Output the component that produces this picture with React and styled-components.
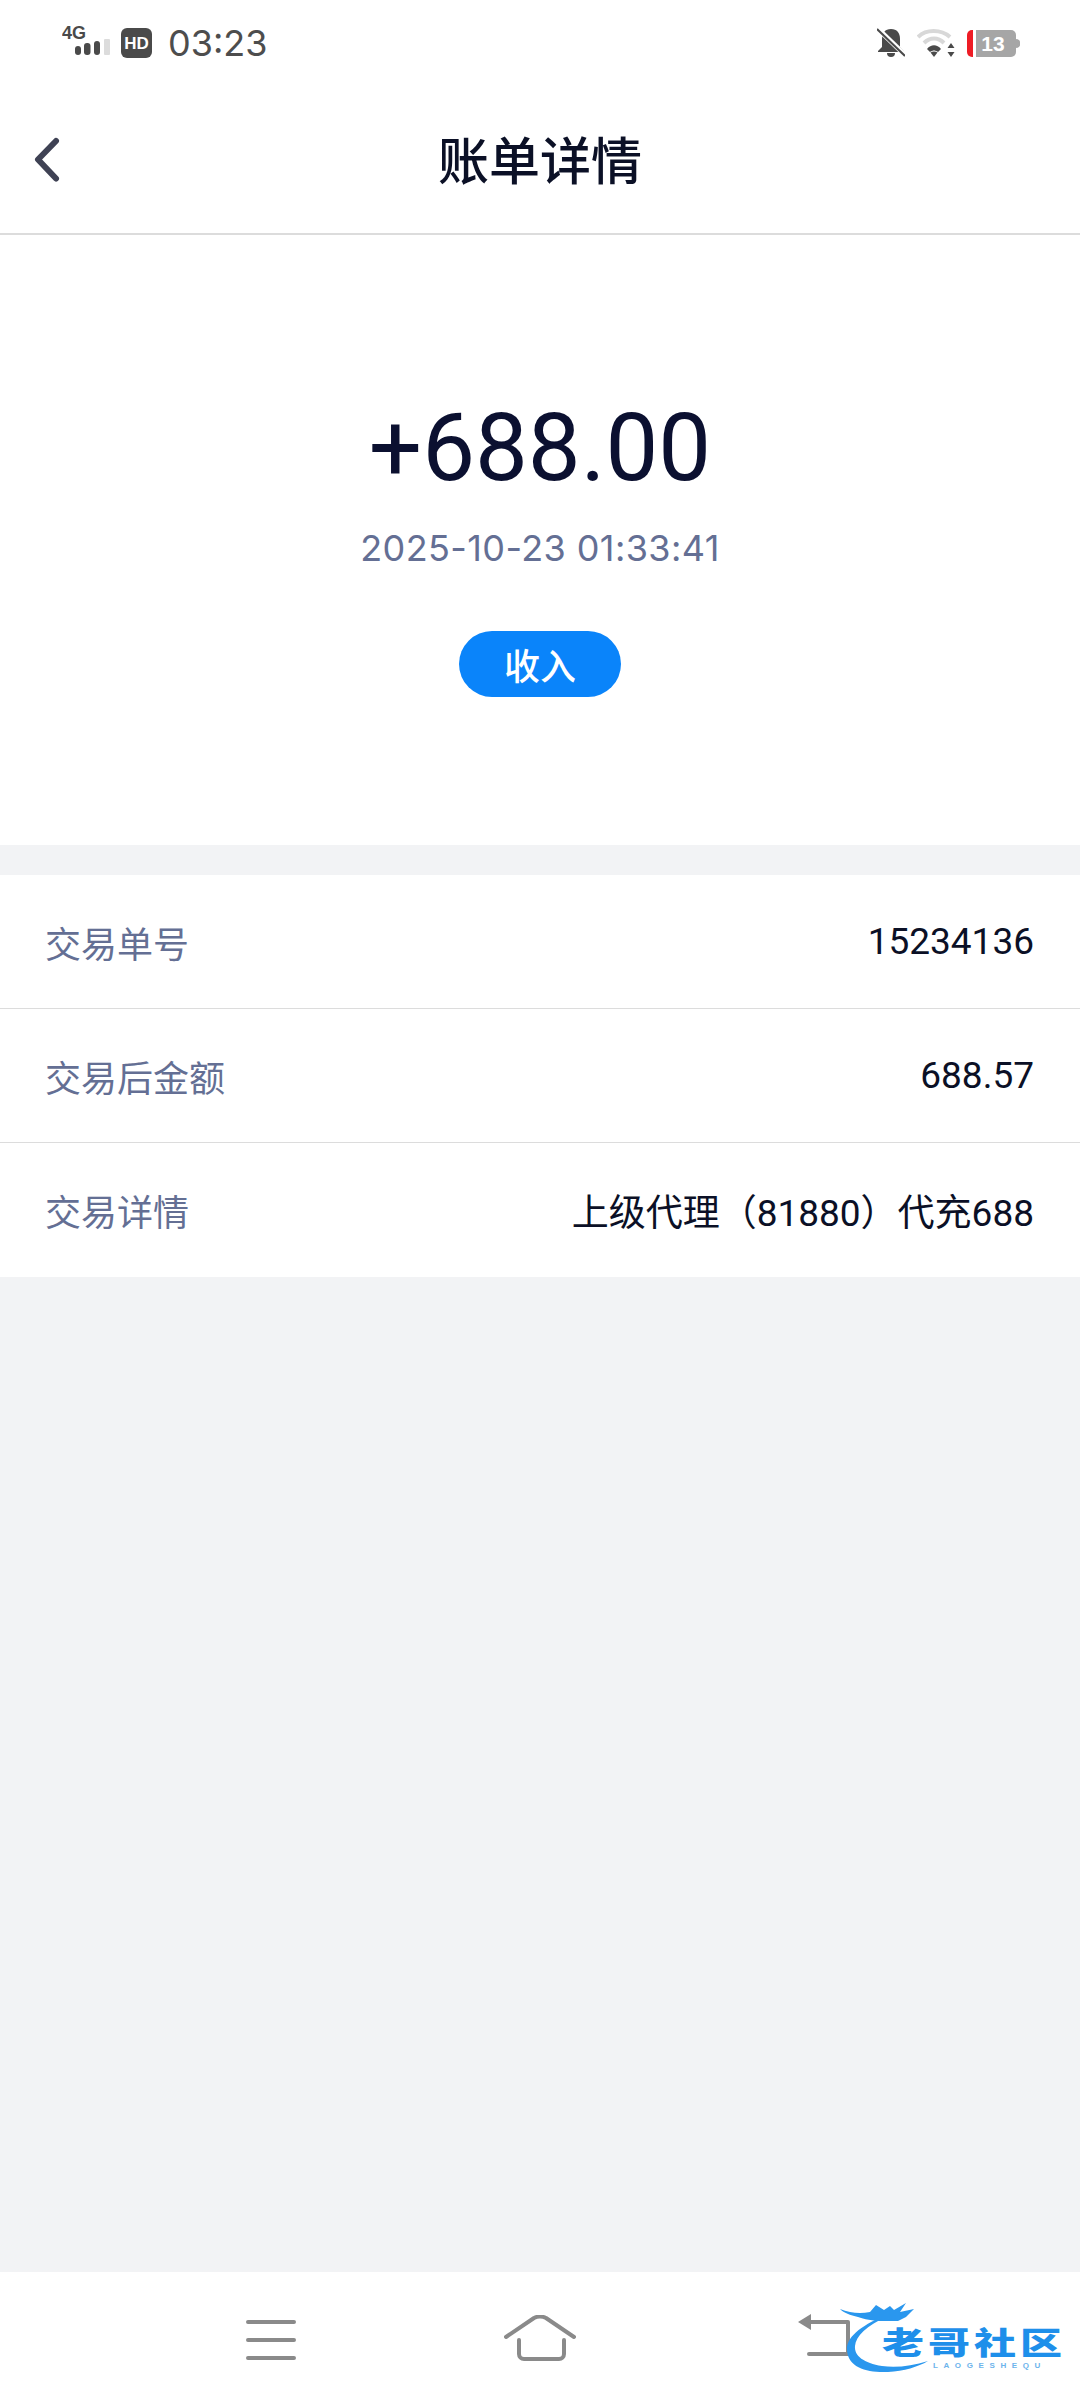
import React from "react";
import styled, { createGlobalStyle } from "styled-components";

const GlobalStyle = createGlobalStyle`
  html, body { margin: 0; padding: 0; }
  body {
    background: #f2f3f5;
    font-family: Inter, "Noto Sans CJK SC", sans-serif;
  }
`;

const Page = styled.div`
  position: relative;
  width: 1080px;
  height: 2400px;
  display: flex;
  flex-direction: column;
  background: #f2f3f5;
  overflow: hidden;
`;

const StatusBar = styled.div`
  height: 80px;
  flex: none;
  box-sizing: border-box;
  padding: 6px 60px 0 62px;
  display: flex;
  align-items: center;
  justify-content: space-between;
  background: #fff;
  color: #4a4a4a;
`;

const StatusGroup = styled.div`
  display: flex;
  align-items: center;
`;

const Clock = styled.span`
  margin-left: 16px;
  font-family: Inter, sans-serif;
  font-size: 36px;
  line-height: 40px;
  color: #4d4d4d;
`;

const TitleBar = styled.header`
  position: relative;
  height: 155px;
  flex: none;
  box-sizing: border-box;
  display: flex;
  align-items: center;
  justify-content: center;
  background: #fff;
  border-bottom: 2px solid #dcdcdc;
`;

const BackButton = styled.button`
  position: absolute;
  left: 33px;
  top: 53px;
  width: 30px;
  height: 52px;
  padding: 0;
  border: 0;
  background: none;
  display: flex;
`;

const Title = styled.h1`
  margin: 0;
  font-family: "Noto Sans CJK SC", sans-serif;
  font-size: 51px;
  line-height: 70px;
  font-weight: 500;
  color: #0b1026;
  position: relative;
  top: 1px;
`;

const Summary = styled.section`
  height: 610px;
  flex: none;
  box-sizing: border-box;
  padding-top: 160px;
  display: flex;
  flex-direction: column;
  align-items: center;
  background: #fff;
`;

const Amount = styled.div`
  font-family: Roboto, sans-serif;
  font-size: 94px;
  line-height: 106px;
  color: #0b1030;
`;

const DateText = styled.div`
  margin-top: 25px;
  font-family: Inter, sans-serif;
  font-size: 36px;
  line-height: 44px;
  letter-spacing: 0.4px;
  color: #646f94;
`;

const TypePill = styled.div`
  margin-top: 61px;
  width: 162px;
  height: 66px;
  border-radius: 33px;
  display: flex;
  align-items: center;
  justify-content: center;
  background: #0a84fa;
  color: #fff;
  font-family: "Noto Sans CJK SC", sans-serif;
  font-size: 36px;
  font-weight: 500;
`;

const DetailList = styled.section`
  margin-top: 30px;
  flex: none;
  background: #fff;
`;

const DetailRow = styled.div`
  height: 134px;
  box-sizing: border-box;
  padding: 0 46px 0 45px;
  display: flex;
  align-items: center;
  justify-content: space-between;
  font-size: 36px;
  border-bottom: ${(p) => (p.$last ? "none" : "1px solid #dcdcdc")};
`;

const RowLabel = styled.span`
  font-family: "Noto Sans CJK SC", sans-serif;
  color: #646f94;
`;

const RowValue = styled.span`
  font-family: Roboto, "Noto Sans CJK SC", sans-serif;
  font-size: 37px;
  color: #0b1026;
`;

const Spacer = styled.div`
  flex: 1;
`;

const NavBar = styled.nav`
  height: 128px;
  flex: none;
  box-sizing: border-box;
  padding: 8px 0 0 246px;
  display: flex;
  align-items: center;
  background: #fff;
`;

const NavItem = styled.div`
  display: flex;
  margin-right: ${(p) => p.$gap}px;
  margin-bottom: ${(p) => p.$lift || 0}px;
`;

const Watermark = styled.div`
  position: absolute;
  left: 840px;
  top: 2300px;
  width: 240px;
  height: 100px;
`;

const WatermarkName = styled.div`
  position: absolute;
  left: 42px;
  top: 20px;
  font-family: "Noto Sans CJK SC", sans-serif;
  font-size: 42px;
  line-height: 42px;
  font-weight: 900;
  letter-spacing: 4px;
  white-space: nowrap;
  color: #1e8fea;
  transform: scaleY(0.72);
`;

const WatermarkSub = styled.div`
  position: absolute;
  left: 93px;
  top: 61px;
  font-family: "Liberation Sans", sans-serif;
  font-size: 8px;
  line-height: 9px;
  font-weight: 700;
  letter-spacing: 5.6px;
  white-space: nowrap;
  color: #6db4ec;
`;

const WatermarkDragon = styled.svg`
  position: absolute;
  left: 0;
  top: 0;
`;

const rows = [
  { label: "交易单号", value: "15234136" },
  { label: "交易后金额", value: "688.57" },
  { label: "交易详情", value: "上级代理（81880）代充688" },
];

function SignalIcon() {
  return (
    <svg width="52" height="44" viewBox="0 -4 52 44">
      <text x="0" y="14" fontFamily="Liberation Sans" fontSize="18" fontWeight="700" fill="#4a4a4a">4G</text>
      <rect x="13" y="21" width="6" height="9" rx="3" fill="#4a4a4a" />
      <rect x="22" y="18" width="6.500" height="12" rx="3" fill="#4a4a4a" />
      <rect x="32" y="16" width="6" height="14" rx="3" fill="#4a4a4a" />
      <rect x="42" y="14" width="6" height="16" rx="1" fill="#dcdcdc" />
    </svg>
  );
}

function HdIcon() {
  return (
    <svg width="31" height="30" viewBox="0 0 31 30" style={{ marginLeft: 7 }}>
      <rect width="31" height="30" rx="6" fill="#4a4a4a" />
      <text x="15.5" y="21" textAnchor="middle" fontFamily="Liberation Sans" fontSize="17" fontWeight="700" fill="#fff">HD</text>
    </svg>
  );
}

function BellOffIcon() {
  return (
    <svg width="28" height="30" viewBox="0 0 28 30">
      <path d="M14 1c6 0 9 4 9 10v8l4 4v1H1v-1l4-4v-8C5 5 8 1 14 1z" fill="#4a4a4a" />
      <path d="M10 25h8a4 4 0 0 1-8 0z" fill="#4a4a4a" />
      <path d="M0 0l28 27" stroke="#fff" strokeWidth="5" />
      <path d="M0 1l28 27" stroke="#4a4a4a" strokeWidth="2" />
    </svg>
  );
}

function WifiIcon() {
  return (
    <svg width="38" height="28" viewBox="0 0 38 28" style={{ marginLeft: 12 }}>
      <path d="M1 8C9 0 24 0 33 8" fill="none" stroke="#d8d8d8" strokeWidth="4" />
      <path d="M7 14C13 8 21 8 27 14" fill="none" stroke="#d8d8d8" strokeWidth="4" />
      <path d="M10 20C14 15 20 15 24 20l-3 3c-3-2-5-2-8 0z" fill="#4a4a4a" />
      <path d="M13.5 23.500c2-1.500 5-1.500 7 0L17 28z" fill="#4a4a4a" />
      <path d="M34 14l3.500 5h-7zM34 28l-3.500-5h7z" fill="#4a4a4a" />
    </svg>
  );
}

function BatteryIcon() {
  return (
    <svg width="53" height="27" viewBox="0 0 53 27" style={{ marginLeft: 12 }}>
      <path d="M9 0h35a5 5 0 0 1 5 5v17a5 5 0 0 1-5 5H9z" fill="#a6a6a6" />
      <path d="M6 0H5a5 5 0 0 0-5 5v17a5 5 0 0 0 5 5h1z" fill="#ee1c25" />
      <path d="M49 9a4 4 0 0 1 0 9z" fill="#a6a6a6" />
      <text x="26" y="21" textAnchor="middle" fontFamily="Liberation Sans" fontSize="21" fontWeight="700" fill="#fff">13</text>
    </svg>
  );
}

function BackIcon() {
  return (
    <svg width="30" height="52" viewBox="0 0 30 52">
      <path d="M23 8L5 26.500l18 19" fill="none" stroke="#3f4254" strokeWidth="6" strokeLinecap="round" strokeLinejoin="round" />
    </svg>
  );
}

function MenuIcon() {
  return (
    <svg width="50" height="42" viewBox="0 0 50 42">
      <path d="M2 3h46M2 21h46M2 39h46" stroke="#8a8a8a" strokeWidth="4" strokeLinecap="round" />
    </svg>
  );
}

function HomeIcon() {
  return (
    <svg width="72" height="46" viewBox="0 0 72 46">
      <path d="M2 22L30 3q6-3 12 0l28 19" fill="none" stroke="#8a8a8a" strokeWidth="4" strokeLinejoin="round" strokeLinecap="round" />
      <path d="M15 25v14a5 5 0 0 0 5 5h35a5 5 0 0 0 5-5V25" fill="none" stroke="#8a8a8a" strokeWidth="4" strokeLinecap="round" />
    </svg>
  );
}

function ReturnIcon() {
  return (
    <svg width="54" height="42" viewBox="0 0 54 42">
      <path d="M0 8L13 0v6h37v4H13v6z" fill="#8a8a8a" />
      <path d="M50 8v32M11 40h39" fill="none" stroke="#8a8a8a" strokeWidth="4" strokeLinecap="round" />
    </svg>
  );
}

function DragonMark() {
  return (
    <WatermarkDragon width="240" height="100" viewBox="0 0 240 100">
      <path d="M44 16C20 26 6 38 7 50c1 18 21 23 41 22 16-1 30-5 40-11-16 5-32 7-46 5-18-3-28-10-27-20 1-10 11-20 33-30z" fill="#2a97ee" />
      <path d="M0 9c10 4 20 5 30 3l6-7 8 5 6-4 4 4 12-7-6 9 14-3-8 8-8 4H44c-12 0-20-2-26-4C10 15 4 13 0 9z" fill="#2a97ee" />
    </WatermarkDragon>
  );
}

export default function App() {
  return (
    <Page>
      <GlobalStyle />
      <StatusBar>
        <StatusGroup>
          <SignalIcon />
          <HdIcon />
          <Clock>03:23</Clock>
        </StatusGroup>
        <StatusGroup>
          <BellOffIcon />
          <WifiIcon />
          <BatteryIcon />
        </StatusGroup>
      </StatusBar>
      <TitleBar>
        <BackButton><BackIcon /></BackButton>
        <Title>账单详情</Title>
      </TitleBar>
      <Summary>
        <Amount>+688.00</Amount>
        <DateText>2025-10-23 01:33:41</DateText>
        <TypePill>收入</TypePill>
      </Summary>
      <DetailList>
        {rows.map((row, i) => (
          <DetailRow key={row.label} $last={i === rows.length - 1}>
            <RowLabel>{row.label}</RowLabel>
            <RowValue>{row.value}</RowValue>
          </DetailRow>
        ))}
      </DetailList>
      <Spacer />
      <NavBar>
        <NavItem $gap={208}><MenuIcon /></NavItem>
        <NavItem $gap={222} $lift={4}><HomeIcon /></NavItem>
        <NavItem $gap={0} $lift={10}><ReturnIcon /></NavItem>
      </NavBar>
      <Watermark>
        <DragonMark />
        <WatermarkName>老哥社区</WatermarkName>
        <WatermarkSub>LAOGESHEQU</WatermarkSub>
      </Watermark>
    </Page>
  );
}
